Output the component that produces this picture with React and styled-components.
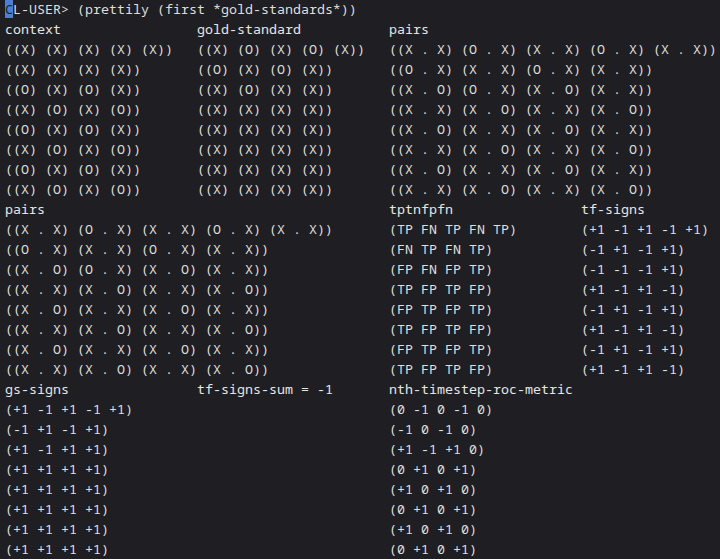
import React from "react";
import styled, { createGlobalStyle } from "styled-components";

const GlobalStyle = createGlobalStyle`
  html, body {
    margin: 0;
    padding: 0;
    background: #1f1f23;
  }
`;

const Terminal = styled.div`
  width: 720px;
  height: 559px;
  overflow: hidden;
  box-sizing: border-box;
  background: #1f1f23;
  color: #dedede;
  font-family: "Noto Sans Mono", "DejaVu Sans Mono", "Liberation Mono", monospace;
  font-size: 13.33px;
  line-height: 20px;
  padding: 0 0 0 5px;
  white-space: pre;
`;

const Line = styled.div`
  height: 20px;
  margin-top: -1px;
  margin-bottom: 1px;
`;

const Cursor = styled.span`
  display: inline-block;
  width: 8px;
  height: 18px;
  line-height: 18px;
  vertical-align: top;
  margin-top: 1px;
  background: #4a80d6;
  color: #1f1f23;
`;

const Section = styled.div`
  display: grid;
  grid-template-columns: 192px 192px 192px 1fr;
`;

const Block = styled.div`
  grid-column: span ${(p) => p.span || 1};
  display: flex;
  flex-direction: column;
`;

const Header = styled(Line)`
  color: #e6e6e6;
`;

const Column = ({ title, rows = [], span }) => (
  <Block span={span}>
    <Header>{title}</Header>
    {rows.map((r, i) => (
      <Line key={i}>{r}</Line>
    ))}
  </Block>
);

const pairs = [
  "((X . X) (O . X) (X . X) (O . X) (X . X))",
  "((O . X) (X . X) (O . X) (X . X))",
  "((X . O) (O . X) (X . O) (X . X))",
  "((X . X) (X . O) (X . X) (X . O))",
  "((X . O) (X . X) (X . O) (X . X))",
  "((X . X) (X . O) (X . X) (X . O))",
  "((X . O) (X . X) (X . O) (X . X))",
  "((X . X) (X . O) (X . X) (X . O))",
];

const context = [
  "((X) (X) (X) (X) (X))",
  "((X) (X) (X) (X))",
  "((O) (X) (O) (X))",
  "((X) (O) (X) (O))",
  "((O) (X) (O) (X))",
  "((X) (O) (X) (O))",
  "((O) (X) (O) (X))",
  "((X) (O) (X) (O))",
];

const goldStandard = [
  "((X) (O) (X) (O) (X))",
  "((O) (X) (O) (X))",
  "((X) (O) (X) (X))",
  "((X) (X) (X) (X))",
  "((X) (X) (X) (X))",
  "((X) (X) (X) (X))",
  "((X) (X) (X) (X))",
  "((X) (X) (X) (X))",
];

const tptnfpfn = [
  "(TP FN TP FN TP)",
  "(FN TP FN TP)",
  "(FP FN FP TP)",
  "(TP FP TP FP)",
  "(FP TP FP TP)",
  "(TP FP TP FP)",
  "(FP TP FP TP)",
  "(TP FP TP FP)",
];

const tfSigns = [
  "(+1 -1 +1 -1 +1)",
  "(-1 +1 -1 +1)",
  "(-1 -1 -1 +1)",
  "(+1 -1 +1 -1)",
  "(-1 +1 -1 +1)",
  "(+1 -1 +1 -1)",
  "(-1 +1 -1 +1)",
  "(+1 -1 +1 -1)",
];

const gsSigns = [
  "(+1 -1 +1 -1 +1)",
  "(-1 +1 -1 +1)",
  "(+1 -1 +1 +1)",
  "(+1 +1 +1 +1)",
  "(+1 +1 +1 +1)",
  "(+1 +1 +1 +1)",
  "(+1 +1 +1 +1)",
  "(+1 +1 +1 +1)",
];

const rocMetric = [
  "(0 -1 0 -1 0)",
  "(-1 0 -1 0)",
  "(+1 -1 +1 0)",
  "(0 +1 0 +1)",
  "(+1 0 +1 0)",
  "(0 +1 0 +1)",
  "(+1 0 +1 0)",
  "(0 +1 0 +1)",
];

const App = () => {
  return (
    <>
      <GlobalStyle />
      <Terminal>
        <Line>
          <Cursor>C</Cursor>L-USER&gt; (prettily (first *gold-standards*))
        </Line>
        <Section>
          <Column title="context" rows={context} />
          <Column title="gold-standard" rows={goldStandard} />
          <Column title="pairs" rows={pairs} span={2} />
        </Section>
        <Section>
          <Column title="pairs" rows={pairs} span={2} />
          <Column title="tptnfpfn" rows={tptnfpfn} />
          <Column title="tf-signs" rows={tfSigns} />
        </Section>
        <Section>
          <Column title="gs-signs" rows={gsSigns} />
          <Column title="tf-signs-sum = -1" />
          <Column title="nth-timestep-roc-metric" rows={rocMetric} span={2} />
        </Section>
      </Terminal>
    </>
  );
};

export default App;
